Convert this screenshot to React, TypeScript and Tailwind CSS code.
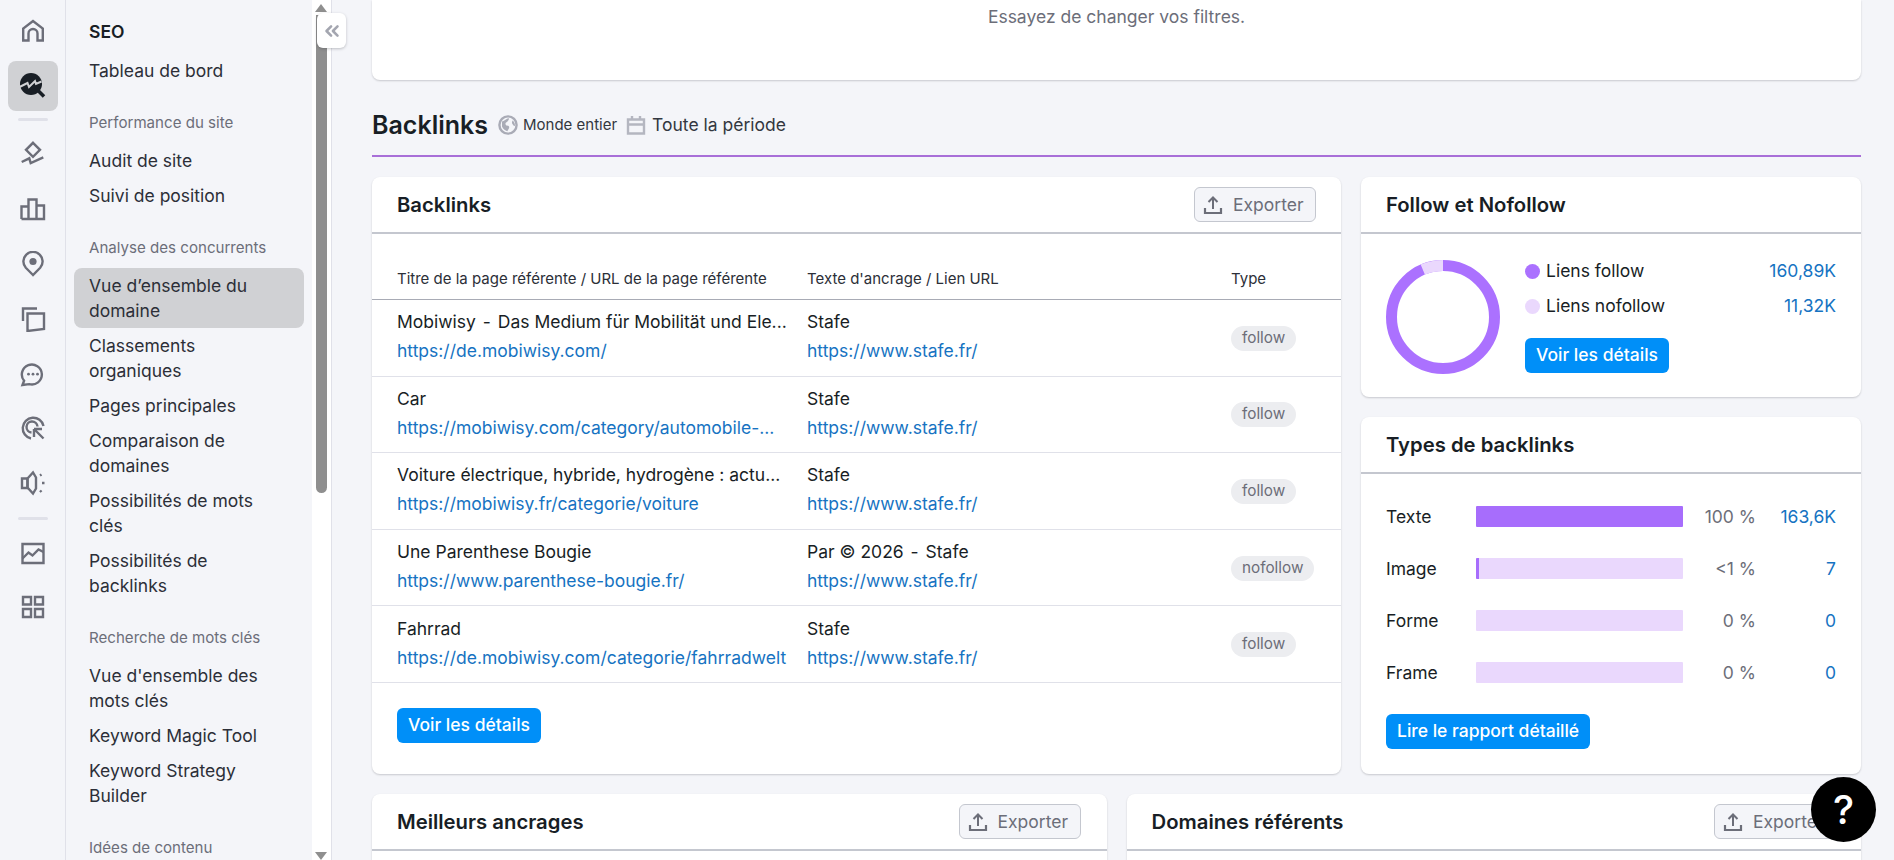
import React from "react";
import { ChevronsLeft } from "lucide-react";

const G = "#6c6e79";

function Ico({ children }: { children: React.ReactNode }) {
  return (
    <svg width="26" height="26" viewBox="0 0 26 26" fill="none" stroke={G} strokeWidth="2.4" strokeLinejoin="miter" strokeLinecap="butt">
      {children}
    </svg>
  );
}

function RailSlot({ children }: { children: React.ReactNode }) {
  return <div className="h-[54.8px] flex items-center justify-center">{children}</div>;
}

function Rail() {
  return (
    <div className="w-[66px] shrink-0 border-r border-[#e0e1e9] flex flex-col items-center pt-[6px]">
      <div className="h-[50px] w-[50px] flex items-center justify-center">
        <Ico><path d="M3.2 22.5V10.5L13 3l9.8 7.5v12h-5.3V15.5a4.5 4.5 0 0 0-9 0v7z" /></Ico>
      </div>
      <div className="mt-[5px] h-[50px] w-[50px] rounded-[8px] bg-[#d0d1d4] flex items-center justify-center">
        <svg width="28" height="28" viewBox="0 0 28 28" fill="none">
          <circle cx="12" cy="12" r="11" fill="#181e25" />
          <path d="M18 17.5l7 7" stroke="#181e25" strokeWidth="3.6" />
          <path d="M0.5 15l8-4 1.5 4 6-6 1 3 5.5-2.5" stroke="#d0d1d4" strokeWidth="2" />
        </svg>
      </div>
      <div className="mt-[7px] h-[3px] w-[30px] rounded-full bg-[#e0e1e9]" />
      <div className="mt-[6px] w-full">
        <RailSlot>
          <Ico>
            <path d="M13 1.8L20 8.8 13 15.8 6 8.8z" />
            <path d="M1.7 21l7.6-3.7 1.4 4.7 12.6-5.7" />
          </Ico>
        </RailSlot>
        <RailSlot>
          <Ico>
            <path d="M1.5 23V10.5H8.5M8.5 23V3.5H16.5V23M16.5 9.5H24V23H1.5" />
          </Ico>
        </RailSlot>
        <RailSlot>
          <Ico>
            <path d="M13 24l-7.2-7.2a9.6 9.6 0 1 1 14.4 0z" />
            <circle cx="13" cy="10.5" r="3.6" fill={G} stroke="none" />
          </Ico>
        </RailSlot>
        <RailSlot>
          <Ico>
            <path d="M3 15V2.5H17" />
            <path d="M7.5 7.5H24V23L7.5 25z" />
          </Ico>
        </RailSlot>
        <RailSlot>
          <Ico>
            <path d="M2.5 24l1.6-4.2a10 10 0 1 1 5 3.3z" />
            <circle cx="8.5" cy="13.2" r="1.4" fill={G} stroke="none" />
            <circle cx="13" cy="13.2" r="1.4" fill={G} stroke="none" />
            <circle cx="17.5" cy="13.2" r="1.4" fill={G} stroke="none" />
          </Ico>
        </RailSlot>
        <RailSlot>
          <Ico>
            <path d="M11 23.5A10.5 10.5 0 1 1 23.5 11" />
            <path d="M11.5 17.5a5.5 5.5 0 1 1 6-6" />
            <path d="M14 14h8M14 14v8M14.5 14.5l9 9" />
          </Ico>
        </RailSlot>
        <RailSlot>
          <Ico>
            <path d="M2 8.5H7.5V18H2z" />
            <path d="M7.5 8.5L13 2.5l3 5v11l-3 5-5.5-6z" />
            <path d="M20 5.5l1.5-1M22 13h2.5M20 20.5l1.5 1.5" />
          </Ico>
        </RailSlot>
      </div>
      <div className="mt-[6px] h-[3px] w-[30px] rounded-full bg-[#e0e1e9]" />
      <div className="mt-[5.6px] w-full">
        <RailSlot>
          <Ico>
            <path d="M2.5 4H23.5V23H2.5z" />
            <path d="M2.5 18.5l6-6 4 3 6-6 5 2.5" />
          </Ico>
        </RailSlot>
        <RailSlot>
          <Ico>
            <path d="M3 3H11V10.5H3zM15 3H23V10.5H15zM3 15H11V23H3zM15 15H23V23H15z" />
          </Ico>
        </RailSlot>
      </div>
    </div>
  );
}

function NavItem({ children, active }: { children: React.ReactNode; active?: boolean }) {
  return (
    <div className={`ml-[8px] w-[230px] rounded-[8px] pl-[15px] pr-[30px] py-[5px] text-[17.5px] leading-[25px] text-[#2c2f38] ${active ? "bg-[#d0d1d4]" : ""}`}>
      {children}
    </div>
  );
}

function NavLabel({ children }: { children: React.ReactNode }) {
  return <div className="mt-[24.5px] mb-[10.5px] ml-[23px] text-[15.1px] leading-[20px] text-[#6c6e79]">{children}</div>;
}

function Sidebar() {
  return (
    <div className="w-[246px] shrink-0 pt-[19px] overflow-hidden">
      <div className="ml-[23px] mb-[9px] text-[17.5px] leading-[25px] font-semibold text-[#181e25]">SEO</div>
      <NavItem>Tableau de bord</NavItem>
      <NavLabel>Performance du site</NavLabel>
      <NavItem>Audit de site</NavItem>
      <NavItem>Suivi de position</NavItem>
      <NavLabel>Analyse des concurrents</NavLabel>
      <NavItem active>Vue d’ensemble du domaine</NavItem>
      <NavItem>Classements organiques</NavItem>
      <NavItem>Pages principales</NavItem>
      <NavItem>Comparaison de domaines</NavItem>
      <NavItem>Possibilités de mots clés</NavItem>
      <NavItem>Possibilités de backlinks</NavItem>
      <NavLabel>Recherche de mots clés</NavLabel>
      <NavItem>Vue d'ensemble des mots clés</NavItem>
      <NavItem>Keyword Magic Tool</NavItem>
      <NavItem>Keyword Strategy Builder</NavItem>
      <NavLabel>Idées de contenu</NavLabel>
    </div>
  );
}

function Scrollbar() {
  return (
    <div className="w-[20px] shrink-0 bg-white border-r border-[#e0e1e9] flex flex-col items-center pr-[1px]">
      <div className="mt-[4px] h-0 w-0 border-x-[6px] border-b-[8px] border-x-transparent border-b-[#8f8f8f]" />
      <div className="mt-[3px] h-[478px] w-[11px] rounded-b-[6px] bg-[#8f8f8f]" />
      <div className="mt-auto mb-0 h-0 w-0 border-x-[6px] border-t-[8px] border-x-transparent border-t-[#8f8f8f]" />
    </div>
  );
}

function Card({ children, className = "" }: { children: React.ReactNode; className?: string }) {
  return <div className={`bg-white rounded-[8px] shadow-[0_1px_2px_rgba(25,27,35,0.2)] ${className}`}>{children}</div>;
}

function Exporter() {
  return (
    <div className="h-[35px] w-[122px] rounded-[6px] border border-[#c4c7cf] bg-[#f4f5f9] flex items-center pl-[8px] gap-[10px] text-[17.5px] text-[#6c6e79]">
      <svg width="20" height="20" viewBox="0 0 20 20" fill="none" stroke="#6c6e79" strokeWidth="2">
        <path d="M10 14V3M5.5 7L10 2.5 14.5 7" />
        <path d="M2 13v5h16v-5" strokeWidth="2.2" />
      </svg>
      <span className="pt-[1px]">Exporter</span>
    </div>
  );
}

function CardHeader({ title, exporter, wide }: { title: string; exporter?: boolean; wide?: boolean }) {
  return (
    <div className={`h-[57px] border-b-2 border-[#c4c7cf] pl-[25px] flex items-center justify-between ${wide ? "pr-[26px]" : "pr-[25px]"}`}>
      <div className="text-[20.3px] leading-[28px] font-semibold text-[#181e25]">{title}</div>
      {exporter && <Exporter />}
    </div>
  );
}

function Btn({ children }: { children: React.ReactNode }) {
  return (
    <div className="inline-flex h-[35px] items-center rounded-[6px] bg-[#008ff8] px-[11px] text-[17.5px] font-medium text-white whitespace-nowrap">
      {children}
    </div>
  );
}

function Dashed({ text }: { text: string }) {
  const parts = text.split(" - ");
  if (parts.length < 2) return <>{text}</>;
  return (
    <>
      {parts[0]} <span className="mx-[2px]">-</span> {parts[1]}
    </>
  );
}

const rows = [
  ["Mobiwisy - Das Medium für Mobilität und Ele...", "https://de.mobiwisy.com/", "Stafe", "follow"],
  ["Car", "https://mobiwisy.com/category/automobile-...", "Stafe", "follow"],
  ["Voiture électrique, hybride, hydrogène : actu...", "https://mobiwisy.fr/categorie/voiture", "Stafe", "follow"],
  ["Une Parenthese Bougie", "https://www.parenthese-bougie.fr/", "Par © 2026 - Stafe", "nofollow"],
  ["Fahrrad", "https://de.mobiwisy.com/categorie/fahrradwelt", "Stafe", "follow"],
];

function BacklinksTable() {
  return (
    <Card className="h-[597px]">
      <CardHeader title="Backlinks" exporter />
      <div className="grid grid-cols-[410px_424px_1fr] pl-[25px] h-[66px] items-center pt-[25px] border-b border-[#a8abb5] text-[15px] leading-[20px] text-[#2c2f38]">
        <div className="whitespace-nowrap">Titre de la page référente / URL de la page référente</div>
        <div>Texte d'ancrage / Lien URL</div>
        <div>Type</div>
      </div>
      {rows.map((r, i) => (
        <div key={i} className="grid grid-cols-[410px_424px_1fr] pl-[25px] h-[76.6px] border-b border-[#e0e1e9] items-center">
          <div className="text-[17.5px] leading-[24px] flex flex-col gap-[5px] pb-[2px]">
            <div className="text-[#181e25] whitespace-nowrap"><Dashed text={r[0]} /></div>
            <div className="text-[#1673c2] whitespace-nowrap">{r[1]}</div>
          </div>
          <div className="text-[17.5px] leading-[24px] flex flex-col gap-[5px] pb-[2px]">
            <div className="text-[#181e25]"><Dashed text={r[2]} /></div>
            <div className="text-[#1673c2]">https://www.stafe.fr/</div>
          </div>
          <div>
            <span className="inline-flex h-[25px] items-center rounded-full bg-[#ecedf0] px-[11px] text-[15.3px] text-[#6c6e79]">{r[3]}</span>
          </div>
        </div>
      ))}
      <div className="pl-[25px] pt-[25px]">
        <Btn>Voir les détails</Btn>
      </div>
    </Card>
  );
}

function Donut() {
  const r = 51.5;
  const c = 2 * Math.PI * r;
  const light = (11.32 / 172.21) * c;
  return (
    <svg width="114" height="114" viewBox="0 0 114 114" className="shrink-0 mt-[2px]">
      <g transform="rotate(-90 57 57)">
        <circle cx="57" cy="57" r={r} fill="none" stroke="#ab71ff" strokeWidth="11" />
        <circle cx="57" cy="57" r={r} fill="none" stroke="#ead8fd" strokeWidth="11" strokeDasharray={`${light} ${c - light}`} strokeDashoffset={light} />
      </g>
    </svg>
  );
}

function FollowCard() {
  return (
    <Card className="h-[220px]">
      <CardHeader title="Follow et Nofollow" />
      <div className="flex pl-[25px] pr-[25px] pt-[24px] gap-[25px]">
        <Donut />
        <div className="flex-1 pt-[1px]">
          <div className="flex flex-col gap-[10px]">
            {[["Liens follow", "160,89K", "bg-[#ab71ff]"], ["Liens nofollow", "11,32K", "bg-[#ead8fd]"]].map((l, i) => (
              <div key={i} className="flex items-center h-[25px] text-[17.5px]">
                <span className={`h-[15px] w-[15px] rounded-full ${l[2]}`} />
                <span className="ml-[6px] text-[#181e25]">{l[0]}</span>
                <span className="ml-auto text-[#1673c2]">{l[1]}</span>
              </div>
            ))}
          </div>
          <div className="mt-[18.5px]">
            <Btn>Voir les détails</Btn>
          </div>
        </div>
      </div>
    </Card>
  );
}

const types = [
  ["Texte", 100, "100 %", "163,6K"],
  ["Image", 1.4, "<1 %", "7"],
  ["Forme", 0, "0 %", "0"],
  ["Frame", 0, "0 %", "0"],
] as const;

function TypesCard() {
  return (
    <Card className="h-[357px]">
      <CardHeader title="Types de backlinks" />
      <div className="pl-[25px] pr-[25px] pt-[29.5px]">
        {types.map((t) => (
          <div key={t[0]} className="grid grid-cols-[90px_207px_73px_1fr] items-center h-[25px] mb-[27px] text-[17.5px]">
            <div className="text-[#181e25]">{t[0]}</div>
            <div className="h-[21px] bg-[#ead8fd] rounded-[1px] overflow-hidden">
              <div className="h-full bg-[#a76dfc]" style={{ width: `${t[1]}%` }} />
            </div>
            <div className="text-right text-[#6c6e79]">{t[2]}</div>
            <div className="text-right text-[#1673c2]">{t[3]}</div>
          </div>
        ))}
        <div className="mt-[29px]">
          <Btn>Lire le rapport détaillé</Btn>
        </div>
      </div>
    </Card>
  );
}

export default function App() {
  return (
    <div className="relative flex h-[860px] w-full overflow-hidden bg-[#f4f5f9] font-['Inter',sans-serif]">
      <Rail />
      <Sidebar />
      <Scrollbar />
      <div className="min-w-0 flex-1 pl-[40px] pr-[33px]">
        <Card className="h-[80px] rounded-t-none flex justify-center">
          <div className="mt-[5px] text-[17.5px] leading-[24px] text-[#6c6e79]">Essayez de changer vos filtres.</div>
        </Card>
        <div className="h-[77px] border-b-2 border-[#a86fd8] flex items-center pt-[15px]">
          <div className="text-[25px] font-semibold leading-[32px] text-[#181e25]">Backlinks</div>
          <svg width="20" height="20" viewBox="0 0 20 20" className="ml-[10px]">
            <circle cx="10" cy="10" r="8.6" fill="none" stroke="#a9abb6" strokeWidth="2.4" />
            <path d="M4 6.5C6 6 8 4 10.5 3c.8 1.2 0 2.6-1 3.4S7 7.5 7.6 9.4s2.6.4 3.4 2-1 3-1.6 4.8C7 15.6 5 14 4 11.5zM14.5 5.5c1.5 1 2.8 3.2 2.4 5.5-1.6 0-1.8-1.4-2.6-2.2s0-2.4.2-3.3z" fill="#a9abb6" />
          </svg>
          <span className="ml-[5px] text-[15px] text-[#333740]">Monde entier</span>
          <svg width="20" height="20" viewBox="0 0 20 20" fill="none" stroke="#b4b6c0" strokeWidth="2.4" className="ml-[9px]">
            <path d="M2 4.5H18V18.5H2zM2 9.5H18M6 1v4M14 1v4" />
          </svg>
          <span className="ml-[6px] text-[17.5px] text-[#333740]">Toute la période</span>
        </div>
        <div className="mt-[20px] grid grid-cols-[969px_500px] gap-[20px]">
          <BacklinksTable />
          <div className="flex flex-col gap-[20px]">
            <FollowCard />
            <TypesCard />
          </div>
        </div>
        <div className="mt-[20px] grid grid-cols-2 gap-[20px]">
          <Card className="h-[200px]">
            <CardHeader title="Meilleurs ancrages" exporter wide />
          </Card>
          <Card className="h-[200px]">
            <CardHeader title="Domaines référents" exporter />
          </Card>
        </div>
      </div>
      <div className="absolute left-[317px] top-[13px] flex h-[35px] w-[29px] items-center justify-center rounded-[6px] bg-white shadow-[0_1px_3px_rgba(25,27,35,0.25)]">
        <ChevronsLeft size={22} strokeWidth={2.8} color="#a4a6b0" />
      </div>
      <div className="absolute bottom-[18px] right-[18px] flex h-[65px] w-[65px] items-center justify-center rounded-full bg-black text-[40px] font-medium text-white">
        ?
      </div>
    </div>
  );
}
